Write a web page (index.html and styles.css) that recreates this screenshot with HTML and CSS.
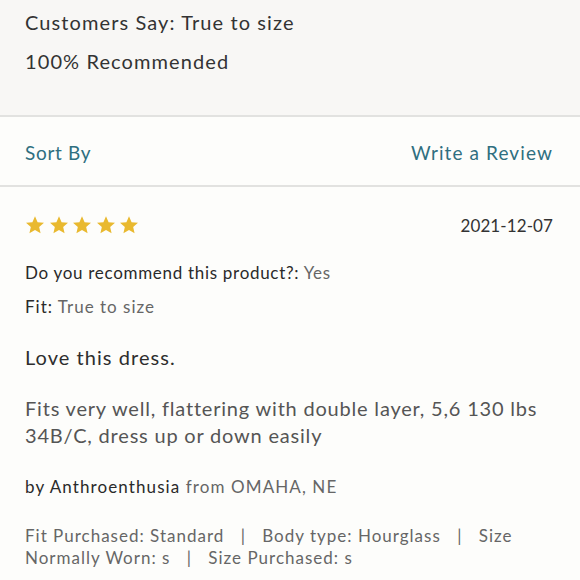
FILE: index.html
```html
<!DOCTYPE html>
<html>
<head>
<meta charset="utf-8">
<link rel="stylesheet" href="styles.css">
</head>
<body>
<section class="summary">
  <p class="summary-line">Customers Say: True to size</p>
  <p class="summary-line">100% Recommended</p>
</section>
<nav class="toolbar">
  <span class="link">Sort By</span>
  <span class="link link-write">Write a Review</span>
</nav>
<article class="review">
  <div class="review-head">
    <div class="stars">
      <svg viewBox="0 0 24 24" class="star"><path d="M12 1.5l3.1 7.1 7.7.7-5.8 5.1 1.7 7.6L12 18l-6.7 4 1.7-7.6-5.8-5.1 7.7-.7z"/></svg>
      <svg viewBox="0 0 24 24" class="star"><path d="M12 1.5l3.1 7.1 7.7.7-5.8 5.1 1.7 7.6L12 18l-6.7 4 1.7-7.6-5.8-5.1 7.7-.7z"/></svg>
      <svg viewBox="0 0 24 24" class="star"><path d="M12 1.5l3.1 7.1 7.7.7-5.8 5.1 1.7 7.6L12 18l-6.7 4 1.7-7.6-5.8-5.1 7.7-.7z"/></svg>
      <svg viewBox="0 0 24 24" class="star"><path d="M12 1.5l3.1 7.1 7.7.7-5.8 5.1 1.7 7.6L12 18l-6.7 4 1.7-7.6-5.8-5.1 7.7-.7z"/></svg>
      <svg viewBox="0 0 24 24" class="star"><path d="M12 1.5l3.1 7.1 7.7.7-5.8 5.1 1.7 7.6L12 18l-6.7 4 1.7-7.6-5.8-5.1 7.7-.7z"/></svg>
    </div>
    <span class="date">2021-12-07</span>
  </div>
  <p class="meta meta-first"><span class="label">Do you recommend this product?:</span> <span class="value">Yes</span></p>
  <p class="meta meta-fit"><span class="label">Fit:</span> <span class="value">True to size</span></p>
  <h3 class="title">Love this dress.</h3>
  <p class="body">Fits very well, flattering with double layer, 5,6 130 lbs 34B/C, dress up or down easily</p>
  <p class="author"><span class="label">by Anthroenthusia</span> <span class="value">from OMAHA, NE</span></p>
  <p class="attrs">Fit Purchased: Standard <span class="sep">|</span> Body type: Hourglass <span class="sep">|</span> Size Normally Worn: s <span class="sep">|</span> Size Purchased: s</p>
</article>
</body>
</html>
```
FILE: styles.css
```css
* { box-sizing: border-box; }
html, body { margin: 0; padding: 0; }
body {
  background: #fdfdfb;
  font-family: Lato, "Noto Sans", sans-serif;
  color: #333;
  width: 580px;
}
p, h3 { margin: 0; }
.summary {
  background: #f8f7f5;
  height: 117px;
  padding: 8px 25px 0;
  border-bottom: 2px solid #e2e2e0;
}
.summary-line {
  font-size: 20px;
  line-height: 28px;
  letter-spacing: 1.1px;
  color: #333;
  margin-bottom: 11px;
}
.toolbar {
  display: flex;
  justify-content: space-between;
  align-items: center;
  height: 70px;
  padding: 0 27px 0 25px;
  border-bottom: 2px solid #e2e2e0;
}
.link {
  color: #2f6f80;
  font-size: 19px;
  letter-spacing: 0.7px;
  padding-top: 2px;
}
.link-write { letter-spacing: 1.1px; }
.review { padding: 24px 27px 0 25px; }
.review-head {
  display: flex;
  justify-content: space-between;
  align-items: center;
  height: 28px;
}
.stars { display: flex; gap: 3.5px; }
.star { width: 20px; height: 20px; fill: #e9b92f; }
.date { font-size: 17px; letter-spacing: 0.1px; color: #333; }
.meta {
  font-size: 17px;
  line-height: 22px;
  letter-spacing: 0.7px;
  margin-top: 12px;
}
.meta-first { margin-top: 23px; }
.meta-fit { letter-spacing: 1px; }
.label { color: #2a2a2a; }
.value { color: #666; }
.title {
  font-size: 20px;
  font-weight: 400;
  line-height: 28px;
  letter-spacing: 1.05px;
  color: #2e2e2e;
  margin-top: 25px;
}
.body {
  font-size: 20px;
  line-height: 27px;
  letter-spacing: 0.8px;
  color: #555;
  margin-top: 24px;
}
.author {
  font-size: 17px;
  line-height: 22px;
  letter-spacing: 1.1px;
  margin-top: 27px;
}
.attrs {
  font-size: 17px;
  line-height: 22px;
  letter-spacing: 1px;
  color: #666;
  margin-top: 27px;
}
.sep { margin: 0 11px; }
```
